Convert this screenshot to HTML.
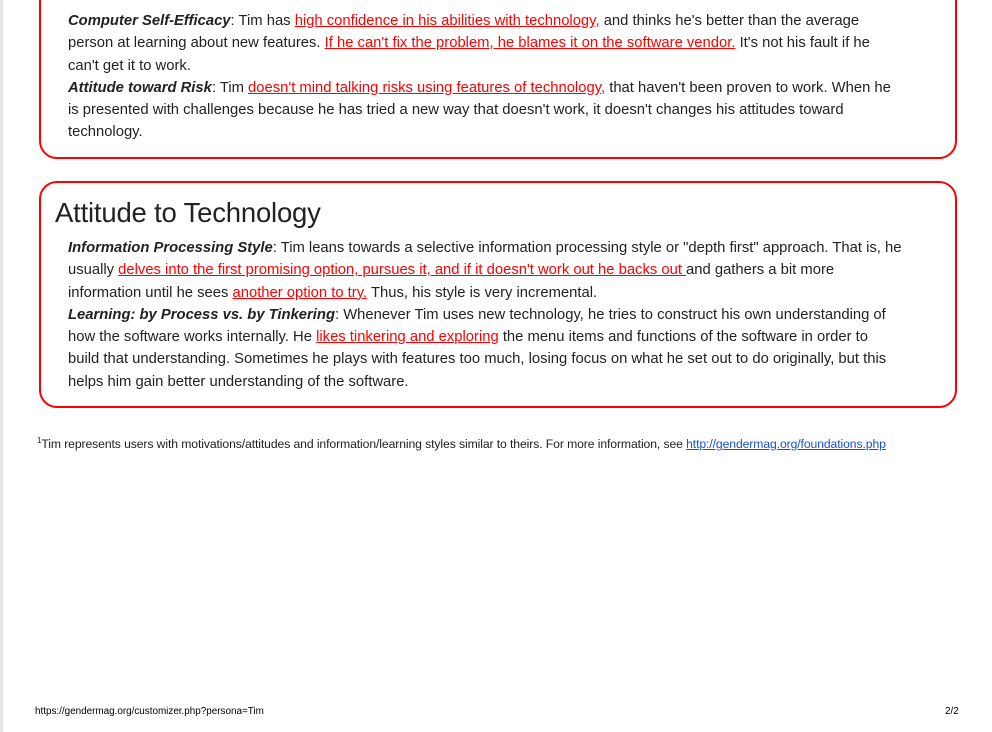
<!DOCTYPE html>
<html><head><meta charset="utf-8"><style>
body{margin:0;width:992px;height:732px;background:#fff;position:relative;overflow:hidden;font-family:"Liberation Sans",sans-serif;color:#222}
.lstrip{position:absolute;left:0;top:0;width:3px;height:732px;background:#e6e6e6}
.box{position:absolute;left:39px;width:914px;border:2px solid #f00;border-radius:18px;box-sizing:content-box}
.b1{top:-30px;height:185px;border-top-left-radius:0;border-top-right-radius:0}
.b2{top:181px;height:223px}
p{margin:0;position:absolute;left:27px;white-space:nowrap;font-size:14.8px;line-height:22.3px;letter-spacing:0}
a{color:#f00;text-decoration:underline}
b{font-style:italic}
h2{position:absolute;left:14px;top:14px;margin:0;font-size:27.5px;font-weight:normal;color:#222;letter-spacing:-0.2px}
.fn{position:absolute;left:37px;top:436px;font-size:12.2px;white-space:nowrap;letter-spacing:-0.1px}
.fn a{color:#1a4fd6}
.foot{position:absolute;top:706px;font-size:9.9px;color:#000}
</style></head><body>
<div class="lstrip"></div>
<div class="box b1">
<p style="top:38px"><b>Computer Self-Efficacy</b>: Tim has <a>high confidence in his abilities with technology,</a> and thinks he's better than the average<br>person at learning about new features. <a>If he can't fix the problem, he blames it on the software vendor.</a> It's not his fault if he<br>can't get it to work.<br><b>Attitude toward Risk</b>: Tim <a>doesn't mind talking risks using features of technology,</a> that haven't been proven to work. When he<br>is presented with challenges because he has tried a new way that doesn't work, it doesn't changes his attitudes toward<br>technology.</p>
</div>
<div class="box b2">
<h2>Attitude to Technology</h2>
<p style="top:54px"><b>Information Processing Style</b>: Tim leans towards a selective information processing style or "depth first" approach. That is, he<br>usually <a>delves into the first promising option, pursues it, and if it doesn't work out he backs out </a>and gathers a bit more<br>information until he sees <a>another option to try.</a> Thus, his style is very incremental.<br><b>Learning: by Process vs. by Tinkering</b>: Whenever Tim uses new technology, he tries to construct his own understanding of<br>how the software works internally. He <a>likes tinkering and exploring</a> the menu items and functions of the software in order to<br>build that understanding. Sometimes he plays with features too much, losing focus on what he set out to do originally, but this<br>helps him gain better understanding of the software.</p>
</div>
<div class="fn"><sup style="font-size:8px">1</sup>Tim represents users with motivations/attitudes and information/learning styles similar to theirs. For more information, see <a>http://gendermag.org/foundations.php</a></div>
<div class="foot" style="left:35px">https://gendermag.org/customizer.php?persona=Tim</div>
<div class="foot" style="left:945px">2/2</div>
</body></html>
